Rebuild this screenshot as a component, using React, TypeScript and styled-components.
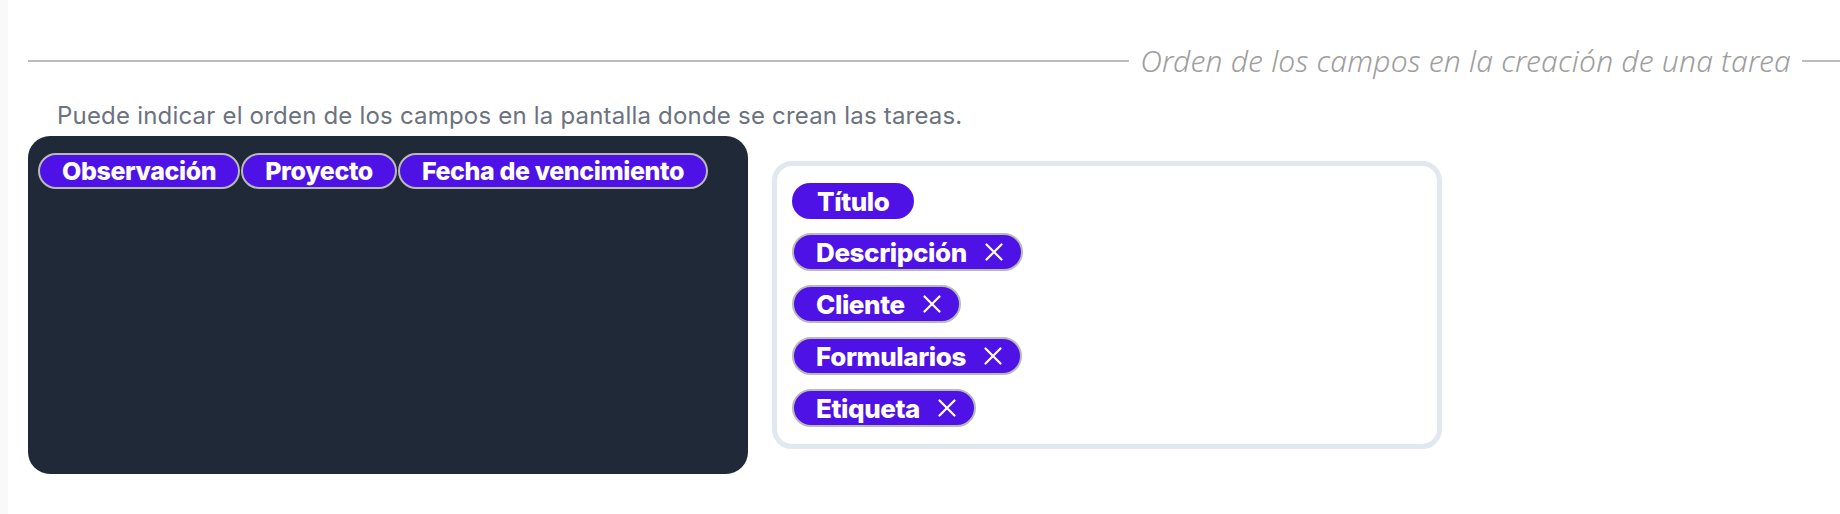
import React from "react";
import styled, { createGlobalStyle } from "styled-components";

const GlobalStyle = createGlobalStyle`
  html, body {
    margin: 0;
    padding: 0;
    background: #f9f9f9;
  }
  body {
    font-family: Inter, "Noto Sans", sans-serif;
  }
  * { box-sizing: border-box; }
`;

const Page = styled.div`
  margin-left: 8px;
  min-height: 514px;
  background: #ffffff;
  padding: 41px 0 0 20px;
`;

const Legend = styled.div`
  display: flex;
  align-items: center;
  height: 40px;
  gap: 11px;
`;

const Rule = styled.div<{ $w?: number }>`
  height: 2px;
  background: #bdbdbd;
  flex: ${(p) => (p.$w ? `0 0 ${p.$w}px` : "1 1 auto")};
`;

const LegendText = styled.span`
  font-family: "Noto Sans", sans-serif;
  font-style: italic;
  font-weight: 300;
  font-size: 30px;
  letter-spacing: 0.2px;
  line-height: 40px;
  color: #9e9e9e;
  white-space: nowrap;
`;

const Help = styled.p`
  margin: 19px 0 0 29px;
  font-family: Inter, sans-serif;
  font-size: 24px;
  letter-spacing: 0.2px;
  line-height: 32px;
  color: #6b7280;
`;

const Panels = styled.div`
  display: flex;
  align-items: center;
  gap: 24px;
  margin-top: 4px;
`;

const Pool = styled.div`
  width: 720px;
  height: 338px;
  background: #1f2937;
  border-radius: 22px;
  padding: 17px 10px;
  display: flex;
  flex-wrap: wrap;
  align-content: flex-start;
  gap: 1px;
`;

const Selected = styled.div`
  width: 670px;
  border: 5px solid #e2e8f0;
  border-radius: 20px;
  padding: 17px 15px;
  display: flex;
  flex-direction: column;
  align-items: flex-start;
  gap: 14px;
`;

const Chip = styled.div<{ $bordered?: boolean; $h: number; $size: number }>`
  display: inline-flex;
  align-items: center;
  gap: 18px;
  height: ${(p) => p.$h}px;
  padding: 0 ${(p) => (p.$bordered ? 22 : 25)}px;
  border: ${(p) => (p.$bordered ? "2px solid #b9b9b9" : "none")};
  border-radius: 999px;
  background: #4e12e6;
  color: #ffffff;
  font-family: Inter, sans-serif;
  font-weight: 800;
  font-size: ${(p) => p.$size}px;
  letter-spacing: -0.4px;
  white-space: nowrap;
`;

const ChipRemovable = styled(Chip)`
  padding-right: 18px;
`;

const Close = styled.svg`
  width: 18px;
  height: 18px;
  flex: none;
`;

const XIcon = () => (
  <Close viewBox="0 0 18 18" fill="none">
    <path d="M1.5 1.5 L16.5 16.5 M16.5 1.5 L1.5 16.5" stroke="#fff" strokeWidth="2.2" strokeLinecap="round" />
  </Close>
);

const poolItems = ["Observación", "Proyecto", "Fecha de vencimiento"];
const selectedItems = ["Descripción", "Cliente", "Formularios", "Etiqueta"];

export default function App() {
  return (
    <>
      <GlobalStyle />
      <Page>
        <Legend>
          <Rule />
          <LegendText>Orden de los campos en la creación de una tarea</LegendText>
          <Rule $w={38} />
        </Legend>
        <Help>Puede indicar el orden de los campos en la pantalla donde se crean las tareas.</Help>
        <Panels>
          <Pool>
            {poolItems.map((t) => (
              <Chip key={t} $bordered $h={36} $size={25}>
                {t}
              </Chip>
            ))}
          </Pool>
          <Selected>
            <Chip $h={36} $size={26}>Título</Chip>
            {selectedItems.map((t) => (
              <ChipRemovable key={t} $bordered $h={38} $size={26}>
                {t}
                <XIcon />
              </ChipRemovable>
            ))}
          </Selected>
        </Panels>
      </Page>
    </>
  );
}
